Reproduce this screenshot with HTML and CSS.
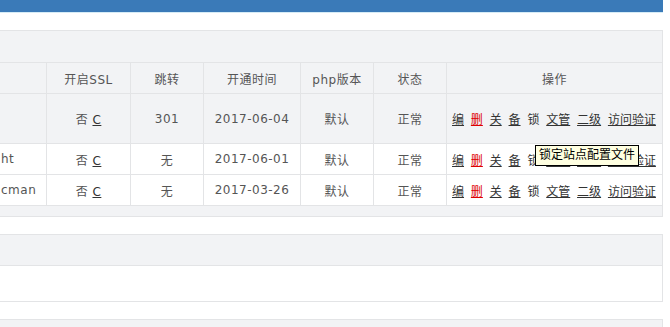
FILE: index.html
```html
<!DOCTYPE html>
<html lang="zh-cn">
<head>
    <meta charset="UTF-8">
    <meta name="viewport" content="width=device-width, initial-scale=1.0">
    <title>网站管理</title>
    <link rel="stylesheet" href="styles.css">
</head>
<body>
    <div class="topbar"></div>
    <div class="main">
        <div class="panel">
            <div class="panel-heading"></div>
            <table class="site-table">
                <thead>
                    <tr>
                        <th class="col-name"></th>
                        <th class="col-ssl">开启SSL</th>
                        <th class="col-jump">跳转</th>
                        <th class="col-time">开通时间</th>
                        <th class="col-php">php版本</th>
                        <th class="col-state">状态</th>
                        <th class="col-ops">操作</th>
                    </tr>
                </thead>
                <tbody>
                    <tr class="row-hover">
                        <td class="name"></td>
                        <td>否 <a href="#">C</a></td>
                        <td>301</td>
                        <td>2017-06-04</td>
                        <td>默认</td>
                        <td>正常</td>
                        <td class="ops">
                            <a href="#">编</a> <a href="#" class="del">删</a> <a href="#">关</a> <a href="#">备</a> <span>锁</span> <a href="#">文管</a> <a href="#">二级</a> <a href="#">访问验证</a>
                        </td>
                    </tr>
                    <tr>
                        <td class="name">ht</td>
                        <td>否 <a href="#">C</a></td>
                        <td>无</td>
                        <td>2017-06-01</td>
                        <td>默认</td>
                        <td>正常</td>
                        <td class="ops">
                            <a href="#">编</a> <a href="#" class="del">删</a> <a href="#">关</a> <a href="#">备</a> <span>锁</span> <a href="#">文管</a> <a href="#">二级</a> <a href="#">访问验证</a>
                        </td>
                    </tr>
                    <tr>
                        <td class="name">cman</td>
                        <td>否 <a href="#">C</a></td>
                        <td>无</td>
                        <td>2017-03-26</td>
                        <td>默认</td>
                        <td>正常</td>
                        <td class="ops">
                            <a href="#">编</a> <a href="#" class="del">删</a> <a href="#">关</a> <a href="#">备</a> <span>锁</span> <a href="#">文管</a> <a href="#">二级</a> <a href="#">访问验证</a>
                        </td>
                    </tr>
                </tbody>
            </table>
            <div class="panel-footer"></div>
            <!-- 鼠标悬停在"锁"上时的提示 -->
            <div class="tooltip">锁定站点配置文件</div>
        </div>

        <div class="panel">
            <div class="panel-heading small"></div>
            <div class="panel-body"></div>
        </div>

        <div class="panel">
            <div class="panel-heading"></div>
        </div>
    </div>
</body>
</html>
```

FILE: styles.css
```css
body {
    margin: 0;
    width: 663px;
    overflow: hidden;
    background-color: #fff;
    font-family: "DejaVu Sans", "Noto Sans CJK SC", sans-serif;
    font-size: 12px;
    color: #555;
}
.topbar {
    height: 12px;
    background-color: #3a7ab8;
    border-bottom: 1px solid #d6ecf6;
}
.main {
    padding-top: 17px;
}
.panel {
    position: relative;
    border-top: 1px solid #e3e4e6;
    border-right: 1px solid #e3e4e6;
    border-bottom: 1px solid #e3e4e6;
    margin-bottom: 17px;
}
.panel-heading {
    height: 31px;
    background-color: #f2f3f5;
}
.panel-heading.small {
    height: 30px;
}
.panel-body {
    height: 35px;
    border-top: 1px solid #e3e4e6;
    background-color: #fff;
}
.panel-footer {
    height: 10px;
    background-color: #f2f3f5;
}
.site-table {
    width: 100%;
    border-collapse: collapse;
    table-layout: fixed;
}
.site-table th,
.site-table td {
    border: 1px solid #e3e4e6;
    text-align: center;
    font-weight: normal;
    letter-spacing: 0.5px;
    white-space: nowrap;
    overflow: hidden;
    padding: 0;
    height: 30px;
}
.site-table th:first-child,
.site-table td:first-child {
    border-left: none;
}
.site-table th:last-child,
.site-table td:last-child {
    border-right: none;
}
.site-table thead tr {
    background-color: #f2f3f5;
}
.site-table .row-hover {
    background-color: #f2f3f5;
}
.site-table .row-hover td {
    height: 49px;
}
.col-name { width: 46px; }
.col-ssl { width: 83px; }
.col-jump { width: 72px; }
.col-time { width: 96px; }
.col-php { width: 72px; }
.col-state { width: 72px; }
.site-table td.name {
    text-align: left;
    padding-left: 1px;
}
.site-table a {
    color: #333;
    text-decoration: underline;
}
.site-table td.ops {
    text-align: left;
    padding-left: 5px;
    letter-spacing: 0;
    word-spacing: 3px;
}
.ops span {
    color: #333;
}
.site-table a.del {
    color: #d00;
}
.tooltip {
    position: absolute;
    left: 535px;
    top: 114px;
    padding: 2px 3px;
    background-color: #ffffe1;
    border: 1px solid #000;
    color: #000;
    font-size: 12px;
    line-height: 15px;
    white-space: nowrap;
}
```
